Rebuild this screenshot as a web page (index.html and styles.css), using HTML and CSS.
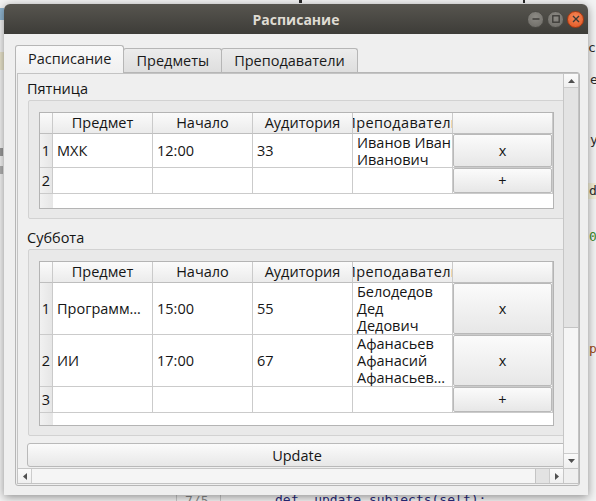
FILE: index.html
```html
<!DOCTYPE html>
<html lang="ru">
<head>
<meta charset="utf-8">
<title>Расписание</title>
<link rel="stylesheet" href="styles.css">
</head>
<body>
<div class="desk">
  <div class="deco d-left1"></div>
  <div class="deco d-left2"></div>
  <div class="deco d-left3"></div>
  <div class="deco d-left4"></div>
  <div class="deco d-top1"></div>
  <div class="deco d-top2"></div>
  <span class="bgt t-cs">cs</span>
  <span class="bgt t-e">e</span>
  <span class="bgt t-y">y</span>
  <span class="bgt t-d">d</span>
  <span class="bgt t-0">0</span>
  <span class="bgt t-p">p</span>
  <span class="bgt t-ln">7/5</span>
  <span class="bgt t-def">def _update_subjects(self):</span>
</div>

<div class="window">
  <div class="titlebar">
    <span class="title">Расписание</span>
    <div class="wbtns">
      <span class="wb gray"><svg width="8" height="8" viewBox="0 0 8 8"><path d="M0.5 4H7.5" stroke="#3a3935" stroke-width="1.4"/></svg></span>
      <span class="wb gray"><svg width="8" height="8" viewBox="0 0 8 8"><rect x="0.8" y="0.8" width="6.4" height="6.4" fill="none" stroke="#3a3935" stroke-width="1.3"/></svg></span>
      <span class="wb close"><svg width="8" height="8" viewBox="0 0 8 8"><path d="M1 1L7 7M7 1L1 7" stroke="#3a3935" stroke-width="1.4"/></svg></span>
    </div>
  </div>

  <div class="wbody">
    <div class="tabs">
      <div class="tab active">Расписание</div>
      <div class="tab">Предметы</div>
      <div class="tab">Преподаватели</div>
    </div>
    <div class="pane">
      <div class="scroll">
        <div class="viewport">
          <div class="content">
            <div class="glabel">Пятница</div>
            <div class="gframe">
              <div class="tbl t1">
                <div class="hc"></div>
                <div class="hc">Предмет</div>
                <div class="hc">Начало</div>
                <div class="hc">Аудитория</div>
                <div class="hc"><span class="wide">Преподаватель</span></div>
                <div class="hc"></div>

                <div class="vh">1</div>
                <div class="c">МХК</div>
                <div class="c">12:00</div>
                <div class="c">33</div>
                <div class="c">Иванов Иван<br>Иванович</div>
                <div class="c bc"><button class="cbtn">x</button></div>

                <div class="vh">2</div>
                <div class="c"></div>
                <div class="c"></div>
                <div class="c"></div>
                <div class="c"></div>
                <div class="c bc"><button class="cbtn">+</button></div>

                <div class="vh fill"></div>
                <div class="fillrest"></div>
              </div>
            </div>

            <div class="glabel second">Суббота</div>
            <div class="gframe">
              <div class="tbl t2">
                <div class="hc"></div>
                <div class="hc">Предмет</div>
                <div class="hc">Начало</div>
                <div class="hc">Аудитория</div>
                <div class="hc"><span class="wide">Преподаватель</span></div>
                <div class="hc"></div>

                <div class="vh">1</div>
                <div class="c">Программ…</div>
                <div class="c">15:00</div>
                <div class="c">55</div>
                <div class="c">Белодедов<br>Дед<br>Дедович</div>
                <div class="c bc"><button class="cbtn">x</button></div>

                <div class="vh">2</div>
                <div class="c">ИИ</div>
                <div class="c">17:00</div>
                <div class="c">67</div>
                <div class="c">Афанасьев<br>Афанасий<br>Афанасьев…</div>
                <div class="c bc"><button class="cbtn">x</button></div>

                <div class="vh">3</div>
                <div class="c"></div>
                <div class="c"></div>
                <div class="c"></div>
                <div class="c"></div>
                <div class="c bc"><button class="cbtn">+</button></div>

                <div class="vh fill"></div>
                <div class="fillrest"></div>
              </div>
            </div>

            <button class="update">Update</button>
          </div>
        </div>

        <div class="vbar">
          <div class="sbtn vb-up"><svg width="7" height="4" viewBox="0 0 7 4"><path d="M0 4L3.5 0L7 4Z" fill="#505050"/></svg></div>
          <div class="vtrack"><div class="vhandle"></div></div>
          <div class="sbtn vb-down"><svg width="7" height="4" viewBox="0 0 7 4"><path d="M0 0L3.5 4L7 0Z" fill="#505050"/></svg></div>
        </div>
        <div class="hbar">
          <div class="sbtn hb-left"><svg width="4" height="7" viewBox="0 0 4 7"><path d="M4 0L0 3.5L4 7Z" fill="#505050"/></svg></div>
          <div class="htrack"><div class="hhandle"></div></div>
          <div class="sbtn hb-right"><svg width="4" height="7" viewBox="0 0 4 7"><path d="M0 0L4 3.5L0 7Z" fill="#505050"/></svg></div>
        </div>
        <div class="corner"></div>
      </div>
    </div>
  </div>
</div>
</body>
</html>
```

FILE: styles.css
```css
* { box-sizing: border-box; }

body {
  margin: 0;
  width: 596px;
  height: 501px;
  overflow: hidden;
  position: relative;
  background: #f3f3f3;
  font-family: "Open Sans", "Noto Sans", "DejaVu Sans", sans-serif;
  font-size: 14.5px;
  color: #151515;
}

/* desktop behind the window */
.desk { position: absolute; inset: 0; }
.deco { position: absolute; }
.d-left1 { left: 0; top: 8px; width: 4px; height: 12px; background: #8fb4cf; }
.d-left2 { left: 0; top: 52px; width: 4px; height: 18px; background: #e9e4cc; }
.d-left3 { left: 0; top: 148px; width: 3px; height: 8px; background: #9a9a9a; }
.d-left4 { left: 0; top: 166px; width: 3px; height: 8px; background: #b0b0b0; }
.d-top1 { left: 299px; top: 0; width: 3px; height: 3px; background: #2b2b2b; }
.d-top2 { left: 523px; top: 0; width: 2px; height: 3px; background: #2b2b2b; }
.bgt { position: absolute; font-family: "DejaVu Sans Mono", monospace; font-size: 13px; color: #2b2b2b; line-height: 16px; }
.t-cs { left: 588px; top: 40px; }
.t-e { left: 590px; top: 72px; }
.t-y { left: 590px; top: 132px; }
.t-d { left: 588px; top: 183px; background: #f2eed6; padding: 0 3px 0 1px; }
.t-0 { left: 589px; top: 229px; color: #3a8a2a; }
.t-p { left: 589px; top: 341px; color: #9a4a1a; }
.t-ln { left: 176px; top: 493px; color: #8a8a8a; border: 1px solid #c8c8c8; border-top: 0; padding: 0 12px 0 8px; }
.t-def { left: 275px; top: 492px; color: #2a2a7a; }

/* window */
.window {
  position: absolute;
  left: 4px;
  top: 4px;
  width: 584px;
  height: 491px;
  border-radius: 6px 6px 0 0;
  background: #efefef;
  box-shadow: 0 2px 10px rgba(0, 0, 0, 0.42);
  display: flex;
  flex-direction: column;
}

.titlebar {
  flex: none;
  height: 30px;
  border-radius: 6px 6px 0 0;
  background: linear-gradient(#57554f, #3d3c38);
  display: grid;
  grid-template-columns: 1fr auto 1fr;
  align-items: center;
}
.title {
  grid-column: 2;
  font-weight: 700;
  font-size: 14px;
  color: #dfdbd2;
}
.wbtns {
  grid-column: 3;
  justify-self: end;
  display: flex;
  gap: 3px;
  padding-right: 4px;
}
.wb {
  width: 17px;
  height: 17px;
  border-radius: 50%;
  display: flex;
  align-items: center;
  justify-content: center;
}
.wb.gray {
  background: radial-gradient(circle at 50% 35%, #8d8b85, #6b6964);
  border: 1px solid #4b4a45;
}
.wb.close {
  background: radial-gradient(circle at 50% 35%, #f68a5a, #df521e);
  border: 1px solid #a93a12;
}

.wbody {
  flex: 1;
  min-height: 0;
  padding: 11px 8px 9px 11px;
  display: flex;
  flex-direction: column;
}

/* tabs */
.tabs {
  flex: none;
  height: 27px;
  display: flex;
  align-items: flex-end;
}
.tab {
  height: 24px;
  padding: 0 12px 1px;
  border: 1px solid #b6b6b6;
  border-bottom: 0;
  border-radius: 3px 3px 0 0;
  background: linear-gradient(#ececec, #dedede);
  display: flex;
  align-items: center;
  margin-right: -1px;
  color: #1a1a1a;
}
.tab.active {
  height: 28px;
  margin-bottom: -1px;
  padding-bottom: 2px;
  background: linear-gradient(#f9f9f9, #f0f0f0);
  position: relative;
  z-index: 1;
}

.pane {
  flex: 1;
  min-height: 0;
  border: 1px solid #b6b6b6;
  border-radius: 0 3px 3px 3px;
  background: #efefef;
  padding: 0 0 1px 1px;
  display: flex;
}

.scroll {
  flex: 1;
  min-width: 0;
  border: 1px solid #c3c3c3;
  display: grid;
  grid-template-columns: 1fr 15px;
  grid-template-rows: 1fr 15px;
}

.viewport {
  grid-column: 1;
  grid-row: 1;
  overflow: hidden;
  background: #efefef;
}
.content {
  width: 558px;
  padding: 6px 9px 0;
}

.glabel {
  height: 18px;
  line-height: 18px;
  margin-bottom: 2px;
}
.glabel.second { margin-top: 10px; }

.gframe {
  margin-left: 1px;
  border: 1px solid #d2d2d2;
  border-radius: 2px;
  background: #e9e9e9;
  padding: 11px 0 9px 10px;
}

/* tables */
.tbl {
  width: 515px;
  border: 1px solid #b4b4b4;
  background: #fff;
  display: grid;
  grid-template-columns: 13px repeat(5, 100px);
}
.t1 { grid-template-rows: 21px 34px 26px 14px; }
.t2 { grid-template-rows: 21px 52px 52px 26px 12px; }

.hc {
  background: linear-gradient(#fbfbfb, #ebebeb);
  border-right: 1px solid #cacaca;
  border-bottom: 1px solid #bebebe;
  display: flex;
  align-items: center;
  justify-content: center;
  overflow: hidden;
  white-space: nowrap;
  padding-bottom: 1px;
}
.hc span { flex: none; }
.hc .wide { letter-spacing: 0.35px; }

.vh {
  background: linear-gradient(90deg, #f1f1f1, #e6e6e6);
  border-right: 1px solid #cacaca;
  border-bottom: 1px solid #cacaca;
  display: flex;
  align-items: center;
  justify-content: center;
}
.vh.fill { border-bottom: 0; border-right: 0; }
.fillrest { grid-column: 2 / span 5; background: #fff; }

.c {
  border-right: 1px solid #cbcbcb;
  border-bottom: 1px solid #cbcbcb;
  padding: 0 4px;
  display: flex;
  align-items: center;
  line-height: 17px;
  white-space: nowrap;
  overflow: hidden;
}
.c.bc { padding: 0; align-items: stretch; }

.cbtn {
  flex: 1;
  margin: 0;
  font: inherit;
  color: #151515;
  border: 1px solid #b9b9b9;
  border-radius: 2px;
  background: linear-gradient(#fbfbfb, #e7e7e7);
  padding: 0;
}

.update {
  display: block;
  margin-top: 7px;
  width: 540px;
  height: 24px;
  font: inherit;
  color: #151515;
  border: 1px solid #b9b9b9;
  border-radius: 3px;
  background: linear-gradient(#fbfbfb, #e7e7e7);
  padding: 0;
}

/* scrollbars */
.vbar {
  grid-column: 2;
  grid-row: 1;
  display: flex;
  flex-direction: column;
  border-left: 1px solid #c6c6c6;
  background: #e3e3e3;
}
.sbtn {
  flex: none;
  background: linear-gradient(#fafafa, #efefef);
  display: flex;
  align-items: center;
  justify-content: center;
}
.vb-up { height: 14px; border-bottom: 1px solid #cccccc; }
.vb-down { height: 15px; border-top: 1px solid #cccccc; }
.vtrack { flex: 1; display: flex; flex-direction: column; }
.vhandle {
  margin-top: auto;
  height: 126px;
  background: #f5f5f5;
  border-top: 1px solid #c4c4c4;
}

.hbar {
  grid-column: 1;
  grid-row: 2;
  display: flex;
  border-top: 1px solid #c6c6c6;
  background: #e3e3e3;
}
.hb-left { width: 14px; border-right: 1px solid #cccccc; }
.hb-right { width: 14px; border-left: 1px solid #cccccc; }
.htrack { flex: 1; display: flex; }
.hhandle {
  width: 504px;
  background: #f5f5f5;
  border-right: 1px solid #c4c4c4;
}
.corner {
  grid-column: 2;
  grid-row: 2;
  border-top: 1px solid #c6c6c6;
  border-left: 1px solid #c6c6c6;
  background: #efefef;
}
```
